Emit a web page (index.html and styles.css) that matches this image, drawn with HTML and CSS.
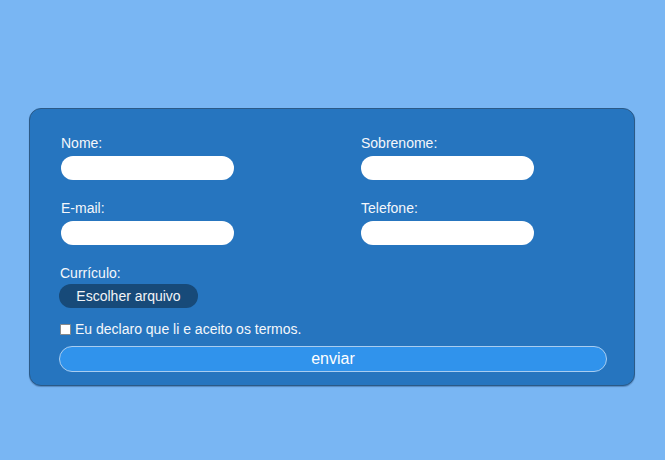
FILE: index.html
```html
<!DOCTYPE html>
<html lang="pt">
<head>
<meta charset="utf-8">
<title>Formulário</title>
<link rel="stylesheet" href="styles.css">
</head>
<body>
<form class="card">
  <div class="grid">
    <div class="field">
      <label class="lbl" for="nome">Nome:</label>
      <input class="txt" id="nome" type="text">
    </div>
    <div class="field">
      <label class="lbl" for="sobrenome">Sobrenome:</label>
      <input class="txt" id="sobrenome" type="text">
    </div>
    <div class="field">
      <label class="lbl" for="email">E-mail:</label>
      <input class="txt" id="email" type="text">
    </div>
    <div class="field">
      <label class="lbl" for="tel">Telefone:</label>
      <input class="txt" id="tel" type="text">
    </div>
  </div>
  <div class="cv">
    <span class="lbl">Currículo:</span>
    <label class="file-btn">Escolher arquivo<input class="file-input" type="file"></label>
  </div>
  <label class="terms"><input class="check" type="checkbox">Eu declaro que li e aceito os termos.</label>
  <button class="send" type="button">enviar</button>
</form>
</body>
</html>
```
FILE: styles.css
```css
* { box-sizing: border-box; }
html, body { margin: 0; padding: 0; }
body {
  background: #79b6f3;
  font-family: "Liberation Sans", Arial, sans-serif;
  font-size: 14px;
  color: #fff;
  height: 460px;
}
.card {
  margin: 108px 0 0 29px;
  width: 606px;
  height: 278px;
  background: #2675bf;
  border: 1px solid #2b5a87;
  border-radius: 12px;
  box-shadow: 0 1px 1px rgba(20, 50, 90, 0.35);
  padding: 26px 27px 0 29px;
  display: flex;
  flex-direction: column;
}
.grid {
  display: grid;
  grid-template-columns: 300px 1fr;
  row-gap: 20px;
  margin-left: 2px;
}
.field { display: flex; flex-direction: column; gap: 5px; align-items: flex-start; }
.lbl { display: block; line-height: 16px; color: #f4f7fb; }
.txt {
  width: 173px;
  height: 24px;
  border: none;
  border-radius: 12px;
  background: #fff;
  margin: 0;
  padding: 0 10px;
  font: inherit;
}
.cv {
  margin-top: 20px;
  display: flex;
  flex-direction: column;
  align-items: flex-start;
  gap: 3px;
  margin-left: 1px;
}
.cv .lbl { margin-left: 0; }
.file-btn {
  display: flex;
  align-items: center;
  justify-content: center;
  width: 139px;
  height: 24px;
  margin-left: -1px;
  border-radius: 12px;
  background: #174a79;
  color: #f2f4f7;
  font-size: 14px;
}
.file-input { display: none; }
.terms {
  margin-top: 13px;
  display: flex;
  align-items: center;
  line-height: 16px;
  color: #f4f7fb;
  margin-left: 1px;
}
.check {
  appearance: none;
  -webkit-appearance: none;
  width: 11px;
  height: 11px;
  margin: 0 4px 0 0;
  background: #fff;
  border: 1px solid #8a8a8a;
  border-radius: 1px;
}
.send {
  margin-top: 9px;
  height: 26px;
  width: 548px;
  border: 1px solid #a9cdf0;
  border-radius: 13px;
  background: #3093ec;
  color: #fff;
  font-family: "Liberation Sans", Arial, sans-serif;
  font-size: 16px;
  padding: 0;
  line-height: 22px;
}
```
